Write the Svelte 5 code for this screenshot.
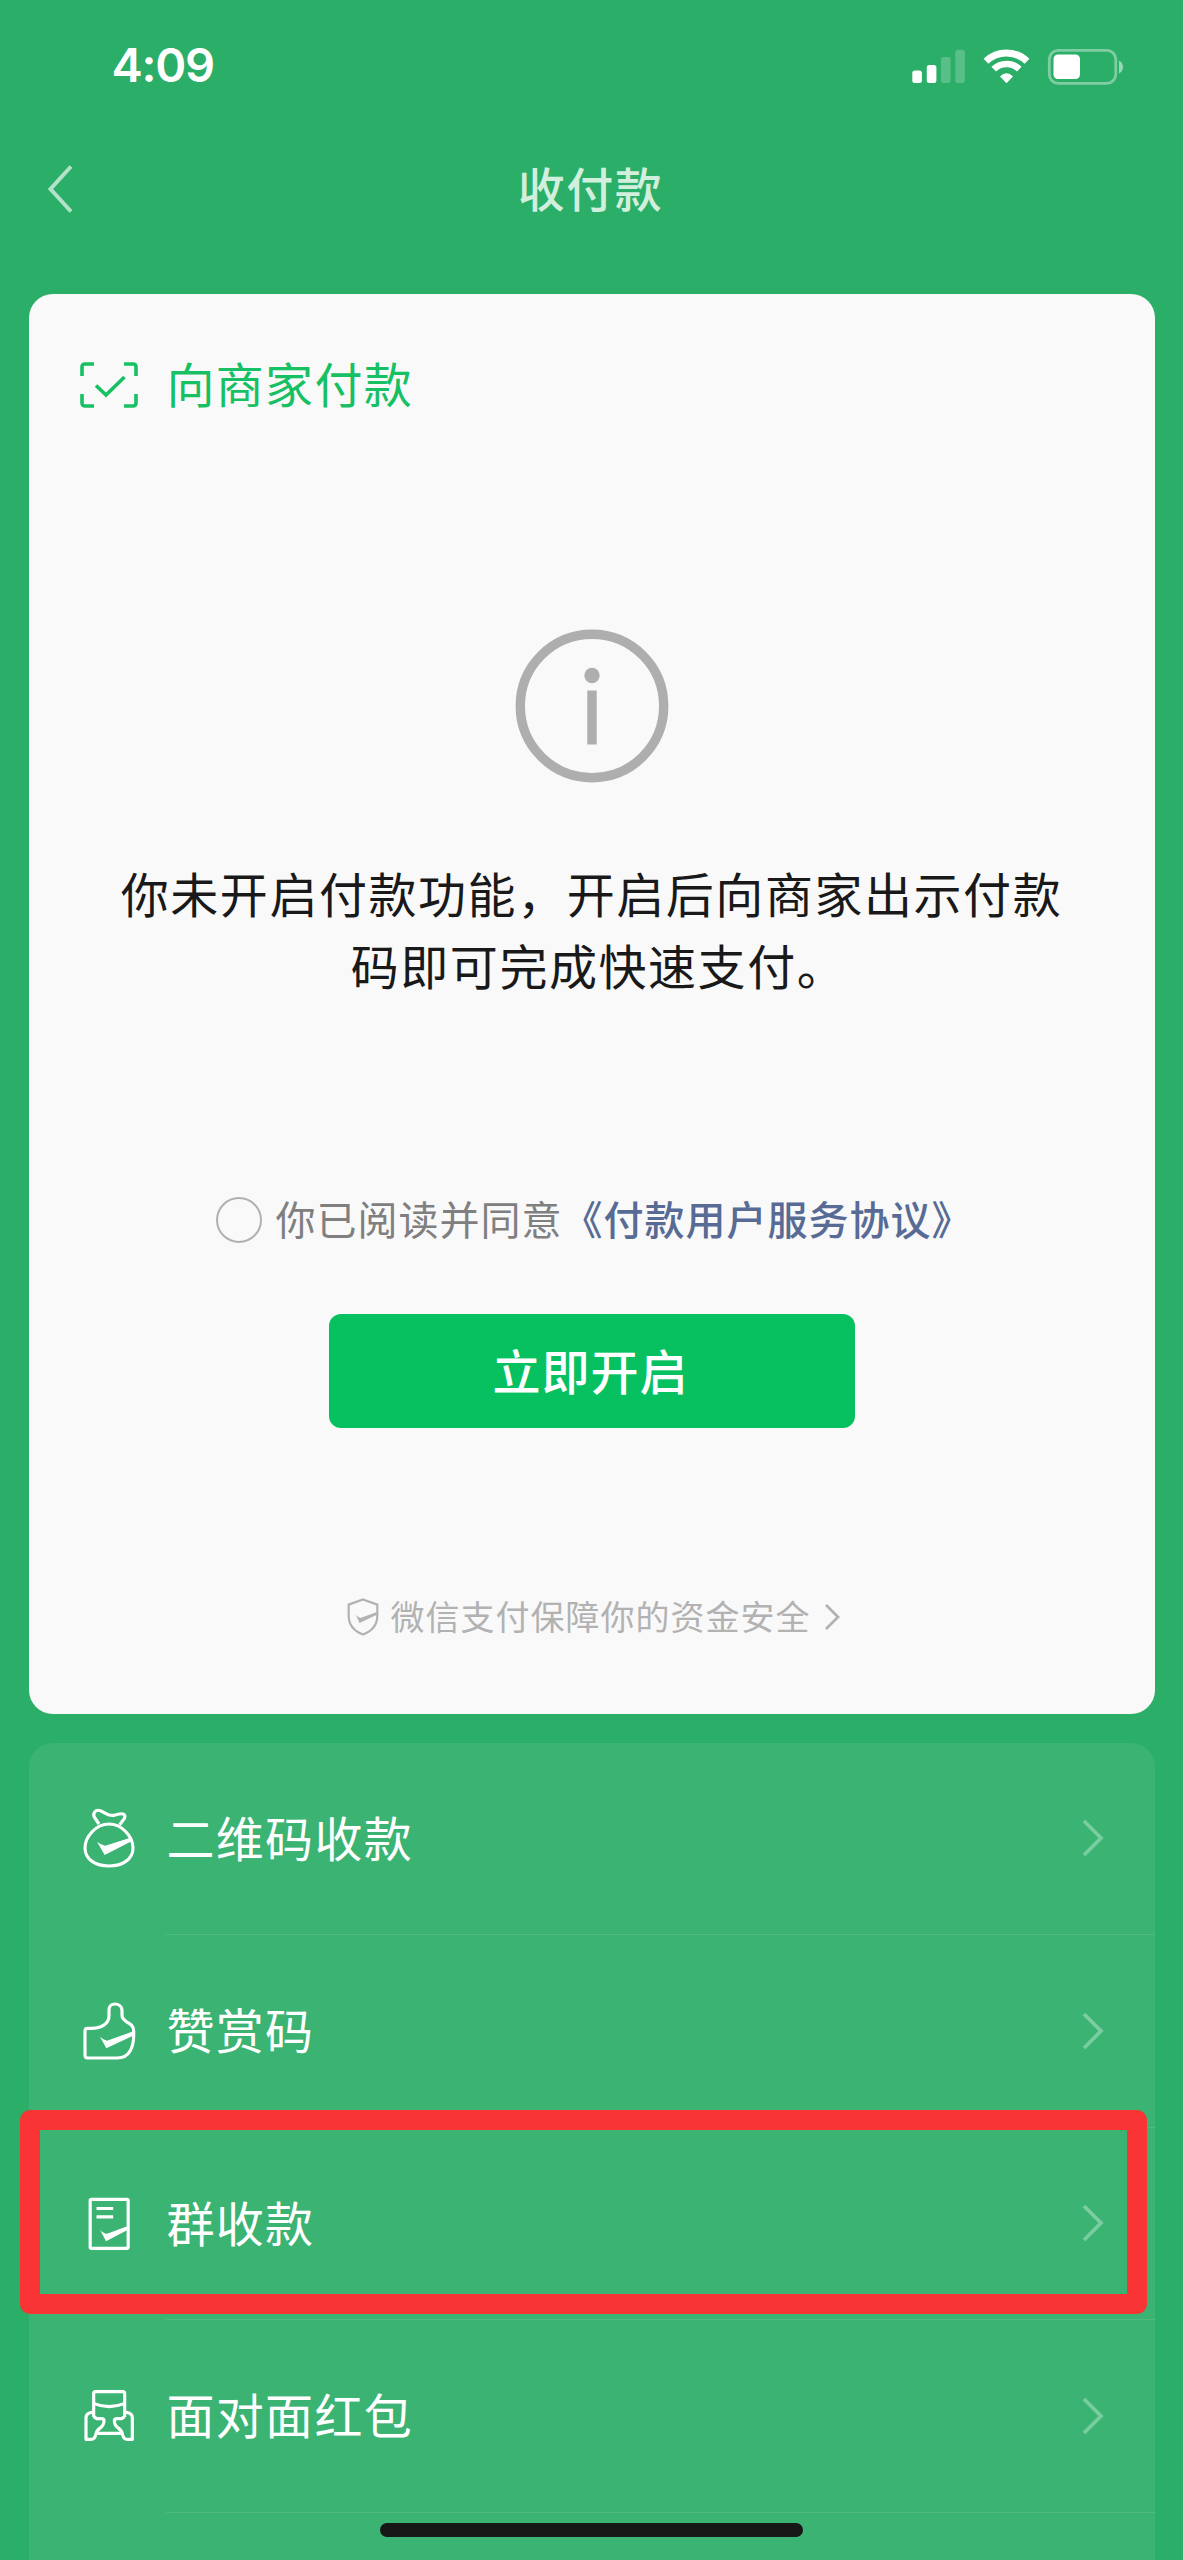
<script lang="ts">
	type Entry = { id: string; label: string; marked?: boolean };

	const entries: Entry[] = [
		{ id: 'bag', label: '二维码收款' },
		{ id: 'thumb', label: '赞赏码' },
		{ id: 'bill', label: '群收款', marked: true },
		{ id: 'packet', label: '面对面红包' }
	];

	let agreed = $state(false);
</script>

<div class="screen">
	<div class="status">
		<span class="time">4:09</span>
		<svg class="indicators" width="216" height="40" viewBox="0 0 216 40">
			<g fill="#fff">
				<rect x="3.3" y="24.5" width="9.6" height="12.5" rx="2.5" />
				<rect x="17.8" y="19" width="9.6" height="18" rx="2.5" />
				<rect x="32" y="11" width="9.6" height="26" rx="2.5" opacity="0.22" />
				<rect x="46.3" y="3.8" width="9.6" height="33.2" rx="2.5" opacity="0.22" />
			</g>
			<g fill="none" stroke="#fff">
				<path d="M77 15.2A29.5 29.5 0 0 1 118 15.2" stroke-width="7" />
				<path d="M84.7 23.2A18.5 18.5 0 0 1 110.3 23.2" stroke-width="6.6" />
			</g>
			<path d="M91 30.4Q97.5 24 104 30.4L97.5 37.2Z" fill="#fff" />
			<rect x="140.3" y="4.3" width="66.5" height="33" rx="9" fill="none" stroke="#fff" stroke-width="2.8" opacity="0.4" />
			<rect x="144.5" y="8.5" width="26.5" height="24.5" rx="4.5" fill="#fff" />
			<path d="M210 14.5Q214 16.5 214 21T210 27.5Z" fill="#fff" opacity="0.5" />
		</svg>
	</div>

	<header class="navbar">
		<svg class="back" width="32" height="52" viewBox="0 0 32 52">
			<path d="M27 3.5L6.5 26L27 48.5" />
		</svg>
		<h1>收付款</h1>
	</header>

	<section class="pay">
		<div class="pay-head">
			<svg width="58" height="46" viewBox="0 0 58 46">
				<path d="M2 14V5Q2 2 5 2H14M44 2H53Q56 2 56 5V14M56 32V41Q56 44 53 44H44M14 44H5Q2 44 2 41V32" />
				<path d="M16 23.5L26 33L44.5 15" />
			</svg>
			<span>向商家付款</span>
		</div>

		<svg class="info" width="154" height="154" viewBox="0 0 154 154">
			<circle cx="77" cy="77" r="71.7" fill="none" stroke="#aeaeae" stroke-width="9.4" />
			<circle cx="77" cy="46.5" r="7.7" fill="#aeaeae" />
			<rect x="72.3" y="61.5" width="9.4" height="54" fill="#aeaeae" />
		</svg>

		<p class="message">你未开启付款功能，开启后向商家出示付款<br />码即可完成快速支付<span class="stop">。</span></p>

		<div class="consent">
			<button class="radio" class:on={agreed} aria-label="同意" onclick={() => (agreed = !agreed)}></button>
			<span>你已阅读并同意<b>《付款用户服务协议》</b></span>
		</div>

		<button class="open">立即开启</button>

		<div class="safety">
			<svg width="32" height="38" viewBox="0 0 32 38">
				<path d="M16 1.5L30.3 6.6V18C30.3 27 25 33 16 36.5C7 33 1.7 27 1.7 18V6.6Z" fill="none" stroke="#b2b2b2" stroke-width="2.2" />
				<path d="M9 17Q11.5 19.5 13.5 20L30.5 13.8V16.5L12.5 25Z" fill="#b2b2b2" />
			</svg>
			<span>微信支付保障你的资金安全</span>
			<svg width="18" height="30" viewBox="0 0 18 30">
				<path d="M3 3L15 15L3 27" fill="none" stroke="#b2b2b2" stroke-width="2.8" />
			</svg>
		</div>
	</section>

	<section class="list">
		{#each entries as entry (entry.id)}
			<div class="row" class:marked={entry.marked}>
				<svg class="icon" width="66" height="66" viewBox="0 0 198 198">
					{#if entry.id === 'bag'}
						<path d="M69 54L56 35C48 22 59 9 73 14C89 20 97 31 113 28C125 26 132 21 141 24C150 28 147 37 141 43L131 56" />
						<path d="M99 54C138 54 171 92 171 126C171 161 138 180 99 180C60 180 27 161 27 126C27 92 60 54 99 54Z" />
						<path class="solid" d="M63 107Q74 117 88 119L168 94V105L86 147Z" />
					{:else if entry.id === 'thumb'}
						<path d="M35 91H47C75 91 99 78 99 54V36C99 25 106 18 117 18C128 18 137 25 138 36V52C138 76 173 70 173 99C175 149 160 180 124 180H35Q27 180 27 172V99Q27 91 35 91Z" />
						<path class="solid" d="M72 116Q82 126 93 128L172 100L171 113L91 151Z" />
					{:else if entry.id === 'bill'}
						<rect x="42.5" y="25" width="114" height="147" rx="4" />
						<path d="M61.5 52.5H111.5M61.5 77.5H111.5" />
						<path class="solid" d="M72 116Q81 127 93 128L156 105V116L90 151Z" />
					{:else}
						<path d="M53 102V32Q53 26 59 26H140Q146 26 146 32V102M53 61Q99.5 81 146 61M61 151H138" />
						<path d="M53 86L38 91Q30 95 30 104V169H45Q56 169 59 156Q61 143 71 136Q84 127 84 114Q84 107 76 107H62L53 101" />
						<path d="M146 86L161 91Q169 95 169 104V169H154Q143 169 140 156Q138 143 128 136Q115 127 115 114Q115 107 123 107H137L146 101" />
					{/if}
				</svg>
				<div class="body">
					<span>{entry.label}</span>
					<svg class="arrow" width="24" height="40" viewBox="0 0 24 40">
						<path d="M3 3L20 20L3 37" />
					</svg>
				</div>
			</div>
		{/each}
	</section>

	<div class="home"></div>
</div>

<style>
	:global(body) {
		margin: 0;
		background: #2bae67;
	}
	.screen {
		position: relative;
		box-sizing: border-box;
		width: 1183px;
		height: 2560px;
		padding: 0 28.5px;
		overflow: hidden;
		display: flex;
		flex-direction: column;
		background: #2bae67;
		font-family: 'Noto Sans CJK SC', sans-serif;
	}
	svg {
		display: block;
		flex: none;
	}
	.status {
		flex: none;
		display: flex;
		align-items: center;
		justify-content: space-between;
		height: 130px;
		padding: 0 30px 0 83px;
	}
	.time {
		font: 600 47px/56px Inter, sans-serif;
		letter-spacing: -1.3px;
		color: #fff;
	}
	.indicators {
		margin-top: 2px;
	}
	.navbar {
		flex: none;
		display: grid;
		grid-template-columns: 60px 1fr 60px;
		align-items: center;
		height: 117px;
		margin-bottom: 47px;
	}
	.back {
		margin-left: 15px;
	}
	.back path {
		fill: none;
		stroke: #b4e2c9;
		stroke-width: 4;
	}
	h1 {
		margin: 0;
		text-align: center;
		font-size: 47px;
		line-height: 60px;
		font-weight: 500;
		letter-spacing: 1.5px;
		color: #d2efde;
		padding: 0 2px 4px 0;
	}
	.pay {
		box-sizing: border-box;
		height: 1420px;
		flex: none;
		display: flex;
		flex-direction: column;
		align-items: center;
		border-radius: 24px;
		background: #f9f9f9;
	}
	.pay-head {
		align-self: stretch;
		display: flex;
		align-items: center;
		gap: 29px;
		height: 60px;
		padding: 61px 0 0 51px;
		color: #16c063;
		font-size: 48px;
		line-height: 60px;
		letter-spacing: 1.3px;
	}
	.pay-head span {
		padding-bottom: 6px;
	}
	.pay-head path {
		fill: none;
		stroke: #16c063;
		stroke-width: 3.6;
	}
	.info {
		margin-top: 214px;
	}
	.message {
		margin: 73px 0 0;
		text-align: center;
		font-size: 48px;
		line-height: 72px;
		letter-spacing: 1.55px;
		color: #191919;
		white-space: nowrap;
	}
	.stop {
		margin-right: -14px;
	}
	.consent {
		display: flex;
		align-items: center;
		gap: 14px;
		height: 60px;
		margin-top: 190px;
		padding-left: 5px;
		font-size: 40px;
		line-height: 60px;
		letter-spacing: 1px;
		color: #7f7f7f;
		white-space: nowrap;
	}
	.consent span {
		padding-bottom: 5px;
	}
	.consent b {
		font-weight: 500;
		color: #576b95;
	}
	.radio {
		box-sizing: border-box;
		width: 46px;
		height: 46px;
		padding: 0;
		border: 2px solid #b0b0b0;
		border-radius: 50%;
		background: none;
	}
	.radio.on {
		background: #07c160;
	}
	.open {
		width: 526px;
		height: 114px;
		margin-top: 64px;
		padding: 0 2px 4px 0;
		border: 0;
		border-radius: 12px;
		background: #07c160;
		color: #fff;
		font: 500 48px/60px 'Noto Sans CJK SC', sans-serif;
		letter-spacing: 1px;
	}
	.safety {
		display: flex;
		align-items: center;
		gap: 12px;
		height: 50px;
		margin-top: 164px;
		padding-left: 4px;
		font-size: 34px;
		line-height: 50px;
		letter-spacing: 1px;
		color: #b2b2b2;
	}
	.safety span {
		padding-bottom: 3px;
	}
	.list {
		height: 900px;
		flex: none;
		margin-top: 28.5px;
		border-radius: 24px;
		background: #3bb373;
	}
	.row {
		position: relative;
		display: flex;
		align-items: center;
		height: 192.5px;
		padding-left: 47px;
		gap: 24px;
	}
	.icon {
		fill: none;
		stroke: #fff;
		stroke-width: 9.5;
		stroke-linejoin: round;
	}
	.icon .solid {
		fill: #fff;
		stroke: none;
	}
	.body {
		flex: 1;
		box-sizing: border-box;
		height: 100%;
		display: flex;
		align-items: center;
		justify-content: space-between;
		padding: 0 50px 0 1px;
		border-bottom: 1px solid #4fbb81;
		font-size: 48px;
		line-height: 60px;
		letter-spacing: 1.3px;
		color: #fff;
	}
	.body span {
		padding-bottom: 5px;
	}
	.arrow path {
		fill: none;
		stroke: #7acca1;
		stroke-width: 3.8;
	}
	/* highlight frame drawn over the row */
	.marked::after {
		content: '';
		position: absolute;
		inset: -18px 8px 6px -8.5px;
		border: 20px solid #f93434;
		border-radius: 10px;
	}
	.home {
		position: absolute;
		bottom: 23px;
		left: 380px;
		width: 423px;
		height: 14px;
		border-radius: 7px;
		background: #171717;
	}
</style>
